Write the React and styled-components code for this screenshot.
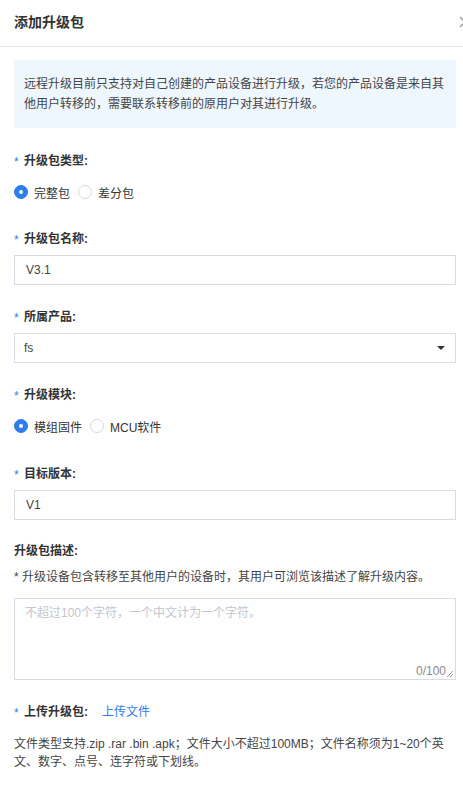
import React, { useState } from "react";
import styled, { createGlobalStyle } from "styled-components";

const GlobalStyle = createGlobalStyle`
  html, body {
    margin: 0;
    padding: 0;
    background: #ffffff;
    overflow: hidden;
  }
  body {
    font-family: "Liberation Sans", "Noto Sans CJK SC", sans-serif;
    color: #333333;
  }
  * {
    box-sizing: border-box;
  }
`;

const Drawer = styled.div`
  width: 470px;
  min-height: 797px;
  background: #ffffff;
`;

const Header = styled.div`
  height: 47px;
  display: flex;
  align-items: center;
  justify-content: space-between;
  padding: 0 0 3px 14px;
  border-bottom: 1px solid #e8e8e8;
`;

const Title = styled.h3`
  margin: 0;
  font-size: 14px;
  font-weight: 700;
  line-height: 20px;
  color: #333333;
`;

const CloseButton = styled.button`
  width: 14px;
  height: 14px;
  margin-right: -2px;
  padding: 0;
  border: none;
  background: transparent;
  cursor: pointer;
  display: flex;
  align-items: center;
  justify-content: center;
`;

const Body = styled.div`
  padding: 13px 14px 0 14px;
`;

const Alert = styled.div`
  background: #eef6fe;
  padding: 14px 10px;
  font-size: 12px;
  line-height: 20px;
  color: #444444;
  margin-bottom: 21px;
`;

const FormItem = styled.div`
  display: flex;
  flex-direction: column;
  margin-bottom: ${({ $gap }) => $gap || 20}px;
`;

const Label = styled.div`
  display: flex;
  align-items: center;
  height: 20px;
  font-size: 12px;
  font-weight: 700;
  color: #333333;
`;

const Star = styled.span`
  width: 10px;
  color: #2d7cf0;
  font-weight: 400;
  font-size: 12px;
  line-height: 20px;
  position: relative;
  top: 3px;
`;

const Hint = styled.div`
  font-size: 12px;
  line-height: 20px;
  color: #444444;
  margin-top: 8px;
`;

const RadioGroup = styled.div`
  display: flex;
  align-items: center;
  height: 20px;
  margin-top: 13px;
  gap: 8px;
`;

const RadioOption = styled.label`
  display: flex;
  align-items: center;
  gap: 6px;
  font-size: 12px;
  color: #333333;
  cursor: pointer;
`;

const RadioDot = styled.span`
  width: 14px;
  height: 14px;
  border-radius: 50%;
  display: flex;
  align-items: center;
  justify-content: center;
  background: ${({ $checked }) => ($checked ? "#2d7cf0" : "#ffffff")};
  border: 1px solid ${({ $checked }) => ($checked ? "#2d7cf0" : "#d4d8e1")};

  &::after {
    content: "";
    width: 4px;
    height: 4px;
    border-radius: 50%;
    background: #ffffff;
    display: ${({ $checked }) => ($checked ? "block" : "none")};
  }
`;

const Input = styled.input`
  margin-top: 8px;
  height: 30px;
  width: 100%;
  border: 1px solid #d8dce5;
  padding: 0 11px;
  font-size: 12px;
  font-family: inherit;
  color: #444444;
  outline: none;
  border-radius: 0;
`;

const Select = styled.div`
  margin-top: 8px;
  height: 30px;
  display: flex;
  align-items: center;
  justify-content: space-between;
  border: 1px solid #d8dce5;
  padding: 0 10px 0 9px;
  font-size: 12px;
  color: #444444;
`;

const Caret = styled.span`
  width: 0;
  height: 0;
  border-left: 4px solid transparent;
  border-right: 4px solid transparent;
  border-top: 4px solid #333333;
`;

const TextAreaBox = styled.div`
  position: relative;
  margin-top: 11px;
  height: 82px;
  border: 1px solid #d8dce5;
`;

const TextArea = styled.textarea`
  width: 100%;
  height: 100%;
  border: none;
  outline: none;
  resize: none;
  padding: 4px 10px;
  font-size: 12px;
  line-height: 20px;
  font-family: inherit;
  color: #444444;

  &::placeholder {
    color: #c2c6cd;
  }
`;

const Counter = styled.span`
  position: absolute;
  right: 9px;
  bottom: 0px;
  font-size: 12px;
  line-height: 16px;
  color: #8c8c8c;
`;

const ResizeGrip = styled.svg`
  position: absolute;
  right: 1px;
  bottom: 1px;
`;

const UploadRow = styled.div`
  display: flex;
  align-items: center;
  gap: 14px;
  margin-bottom: 15px;
`;

const LinkButton = styled.a`
  font-size: 12px;
  color: #2d7cf0;
  text-decoration: none;
  cursor: pointer;
`;

const Note = styled.div`
  font-size: 12px;
  line-height: 18px;
  color: #444444;
`;

const RadioField = ({ options, value, onChange }) => (
  <RadioGroup>
    {options.map((opt) => (
      <RadioOption key={opt} onClick={() => onChange(opt)}>
        <RadioDot $checked={value === opt} />
        {opt}
      </RadioOption>
    ))}
  </RadioGroup>
);

const App = () => {
  const [pkgType, setPkgType] = useState("完整包");
  const [module, setModule] = useState("模组固件");
  const [desc, setDesc] = useState("");

  return (
    <>
      <GlobalStyle />
      <Drawer>
        <Header>
          <Title>添加升级包</Title>
          <CloseButton>
            <svg width="12" height="12" viewBox="0 0 12 12">
              <path d="M1 1L11 11M11 1L1 11" stroke="#9a9a9a" strokeWidth="1.3" />
            </svg>
          </CloseButton>
        </Header>
        <Body>
          <Alert>
            远程升级目前只支持对自己创建的产品设备进行升级，若您的产品设备是来自其他用户转移的，需要联系转移前的原用户对其进行升级。
          </Alert>

          <FormItem $gap={25}>
            <Label>
              <Star>*</Star>升级包类型:
            </Label>
            <RadioField
              options={["完整包", "差分包"]}
              value={pkgType}
              onChange={setPkgType}
            />
          </FormItem>

          <FormItem>
            <Label>
              <Star>*</Star>升级包名称:
            </Label>
            <Input defaultValue="V3.1" />
          </FormItem>

          <FormItem>
            <Label>
              <Star>*</Star>所属产品:
            </Label>
            <Select>
              <span>fs</span>
              <Caret />
            </Select>
          </FormItem>

          <FormItem $gap={26}>
            <Label>
              <Star>*</Star>升级模块:
            </Label>
            <RadioField
              options={["模组固件", "MCU软件"]}
              value={module}
              onChange={setModule}
            />
          </FormItem>

          <FormItem $gap={19}>
            <Label>
              <Star>*</Star>目标版本:
            </Label>
            <Input defaultValue="V1" />
          </FormItem>

          <FormItem>
            <Label>升级包描述:</Label>
            <Hint>* 升级设备包含转移至其他用户的设备时，其用户可浏览该描述了解升级内容。</Hint>
            <TextAreaBox>
              <TextArea
                value={desc}
                maxLength={100}
                onChange={(e) => setDesc(e.target.value)}
                placeholder="不超过100个字符，一个中文计为一个字符。"
              />
              <Counter>{desc.length}/100</Counter>
              <ResizeGrip width="8" height="8" viewBox="0 0 8 8">
                <path d="M1 7L7 1M4 7L7 4" stroke="#888888" strokeWidth="0.8" />
              </ResizeGrip>
            </TextAreaBox>
          </FormItem>

          <UploadRow>
            <Label>
              <Star>*</Star>上传升级包:
            </Label>
            <LinkButton>上传文件</LinkButton>
          </UploadRow>
          <Note>
            文件类型支持.zip .rar .bin .apk；文件大小不超过100MB；文件名称须为1~20个英文、数字、点号、连字符或下划线。
          </Note>
        </Body>
      </Drawer>
    </>
  );
};

export default App;
